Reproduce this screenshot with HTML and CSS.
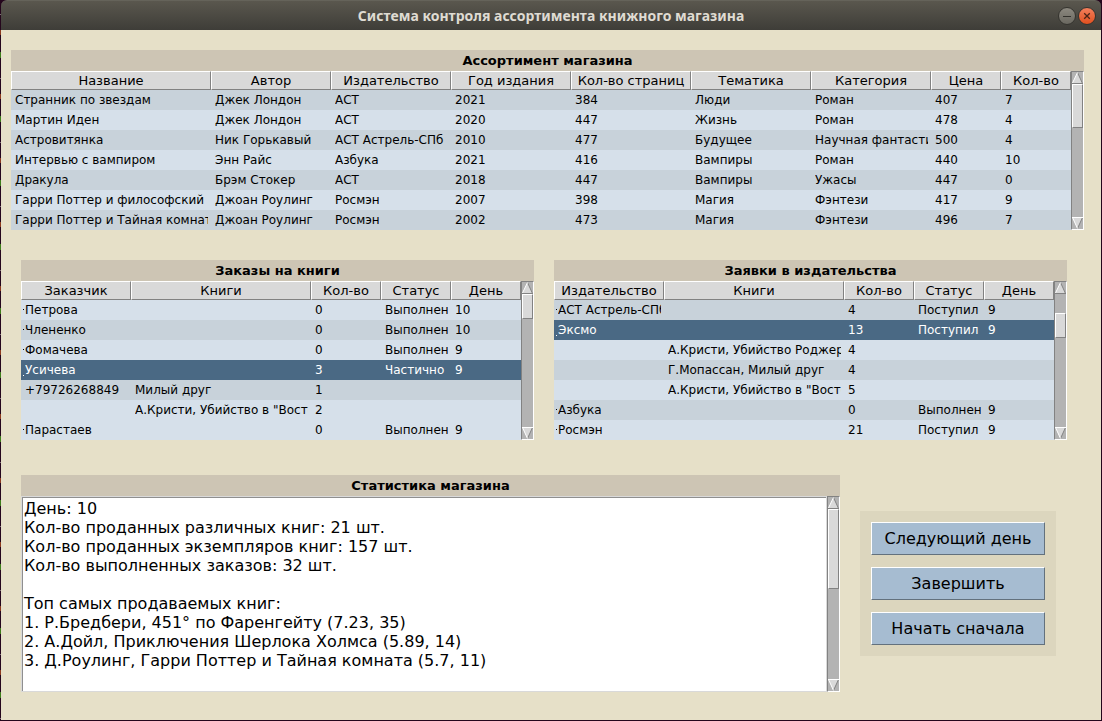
FILE: index.html
```html
<!DOCTYPE html>
<html lang="ru">
<head>
<meta charset="utf-8">
<title>Система контроля ассортимента книжного магазина</title>
<link rel="stylesheet" href="styles.css">
</head>
<body>
<svg class="defs" aria-hidden="true">
  <symbol id="up" viewBox="0 0 11 12"><path d="M5.5 0.5L10.5 11.5H0.5Z" fill="#d9d9d9"/><path d="M10.5 11.5L5.5 0.5" stroke="#828282" fill="none"/><path d="M0 11.5H11" stroke="#828282"/><path d="M0.5 11L5.5 0.5" stroke="#fff" fill="none"/></symbol>
  <symbol id="down" viewBox="0 0 11 12"><path d="M0.5 0.5H10.5L5.5 11.5Z" fill="#d9d9d9"/><path d="M5.5 11.5L10.5 0.5" stroke="#828282" fill="none"/><path d="M5.5 11.5L0.5 0.5" stroke="#fff" fill="none"/><path d="M0 0.5H11" stroke="#fff"/></symbol>
</svg>
<div class="window">
  <header class="titlebar">
    <h1 class="titlebar-text">Система контроля ассортимента книжного магазина</h1>
    <div class="titlebar-controls">
      <button class="control" type="button" aria-label="Свернуть"><svg viewBox="0 0 16 16"><path d="M4 8.5h8" stroke="#33322d" stroke-width="1"/></svg></button>
      <button class="control control-close" type="button" aria-label="Закрыть"><svg viewBox="0 0 16 16"><path d="M5.2 5.2l5.6 5.6M10.8 5.2l-5.6 5.6" stroke="#4b2416" stroke-width="1.3"/></svg></button>
    </div>
  </header>
  <main class="content">
    <section class="panel">
      <h2 class="panel-title">Ассортимент магазина</h2>
      <div class="panel-body">
        <table class="grid">
          <colgroup><col class="c-name"><col class="c-mid"><col class="c-mid"><col class="c-mid"><col class="c-mid"><col class="c-mid"><col class="c-mid"><col class="c-small"><col class="c-small"></colgroup>
          <thead><tr><th>Название</th><th>Автор</th><th>Издательство</th><th>Год издания</th><th>Кол-во страниц</th><th>Тематика</th><th>Категория</th><th>Цена</th><th>Кол-во</th></tr></thead>
          <tbody>
            <tr class="dark"><td><div>Странник по звездам</div></td><td><div>Джек Лондон</div></td><td><div>АСТ</div></td><td><div>2021</div></td><td><div>384</div></td><td><div>Люди</div></td><td><div>Роман</div></td><td><div>407</div></td><td><div>7</div></td></tr>
            <tr><td><div>Мартин Иден</div></td><td><div>Джек Лондон</div></td><td><div>АСТ</div></td><td><div>2020</div></td><td><div>447</div></td><td><div>Жизнь</div></td><td><div>Роман</div></td><td><div>478</div></td><td><div>4</div></td></tr>
            <tr class="dark"><td><div>Астровитянка</div></td><td><div>Ник Горькавый</div></td><td><div>АСТ Астрель-СПб</div></td><td><div>2010</div></td><td><div>477</div></td><td><div>Будущее</div></td><td><div>Научная фантастика</div></td><td><div>500</div></td><td><div>4</div></td></tr>
            <tr><td><div>Интервью с вампиром</div></td><td><div>Энн Райс</div></td><td><div>Азбука</div></td><td><div>2021</div></td><td><div>416</div></td><td><div>Вампиры</div></td><td><div>Роман</div></td><td><div>440</div></td><td><div>10</div></td></tr>
            <tr class="dark"><td><div>Дракула</div></td><td><div>Брэм Стокер</div></td><td><div>АСТ</div></td><td><div>2018</div></td><td><div>447</div></td><td><div>Вампиры</div></td><td><div>Ужасы</div></td><td><div>447</div></td><td><div>0</div></td></tr>
            <tr><td><div>Гарри Поттер и философский камень</div></td><td><div>Джоан Роулинг</div></td><td><div>Росмэн</div></td><td><div>2007</div></td><td><div>398</div></td><td><div>Магия</div></td><td><div>Фэнтези</div></td><td><div>417</div></td><td><div>9</div></td></tr>
            <tr class="dark"><td><div>Гарри Поттер и Тайная комната</div></td><td><div>Джоан Роулинг</div></td><td><div>Росмэн</div></td><td><div>2002</div></td><td><div>473</div></td><td><div>Магия</div></td><td><div>Фэнтези</div></td><td><div>496</div></td><td><div>7</div></td></tr>
          </tbody>
        </table>
        <div class="scrollbar">
          <button class="arrow" type="button" aria-label="Вверх"><svg><use href="#up"/></svg></button>
          <div class="track"><div style="height:0%"></div><div class="thumb" style="height:33%"></div></div>
          <button class="arrow" type="button" aria-label="Вниз"><svg><use href="#down"/></svg></button>
        </div>
      </div>
    </section>

    <div class="pair">
      <section class="panel">
        <h2 class="panel-title">Заказы на книги</h2>
        <div class="panel-body">
          <table class="grid">
            <colgroup><col class="c-party"><col class="c-books"><col class="c-small"><col class="c-small"><col class="c-small"></colgroup>
            <thead><tr><th>Заказчик</th><th>Книги</th><th>Кол-во</th><th>Статус</th><th>День</th></tr></thead>
            <tbody>
              <tr><td class="node"><div>Петрова</div></td><td></td><td><div>0</div></td><td><div>Выполнен</div></td><td><div>10</div></td></tr>
              <tr class="dark"><td class="node"><div>Члененко</div></td><td></td><td><div>0</div></td><td><div>Выполнен</div></td><td><div>10</div></td></tr>
              <tr><td class="node"><div>Фомачева</div></td><td></td><td><div>0</div></td><td><div>Выполнен</div></td><td><div>9</div></td></tr>
              <tr class="selected"><td class="node"><div>Усичева</div></td><td></td><td><div>3</div></td><td><div>Частично</div></td><td><div>9</div></td></tr>
              <tr class="dark"><td><div>+79726268849</div></td><td><div>Милый друг</div></td><td><div>1</div></td><td></td><td></td></tr>
              <tr><td></td><td><div>А.Кристи, Убийство в "Восточном экспрессе"</div></td><td><div>2</div></td><td></td><td></td></tr>
              <tr><td class="node"><div>Парастаев</div></td><td></td><td><div>0</div></td><td><div>Выполнен</div></td><td><div>9</div></td></tr>
            </tbody>
          </table>
          <div class="scrollbar">
            <button class="arrow" type="button" aria-label="Вверх"><svg><use href="#up"/></svg></button>
            <div class="track"><div style="height:0%"></div><div class="thumb" style="height:19%"></div></div>
            <button class="arrow" type="button" aria-label="Вниз"><svg><use href="#down"/></svg></button>
          </div>
        </div>
      </section>
      <section class="panel">
        <h2 class="panel-title">Заявки в издательства</h2>
        <div class="panel-body">
          <table class="grid">
            <colgroup><col class="c-party"><col class="c-books"><col class="c-small"><col class="c-small"><col class="c-small"></colgroup>
            <thead><tr><th>Издательство</th><th>Книги</th><th>Кол-во</th><th>Статус</th><th>День</th></tr></thead>
            <tbody>
              <tr class="dark"><td class="node"><div>АСТ Астрель-СПб</div></td><td></td><td><div>4</div></td><td><div>Поступил</div></td><td><div>9</div></td></tr>
              <tr class="selected"><td class="node"><div>Эксмо</div></td><td></td><td><div>13</div></td><td><div>Поступил</div></td><td><div>9</div></td></tr>
              <tr><td></td><td><div>А.Кристи, Убийство Роджера Экройда</div></td><td><div>4</div></td><td></td><td></td></tr>
              <tr class="dark"><td></td><td><div>Г.Мопассан, Милый друг</div></td><td><div>4</div></td><td></td><td></td></tr>
              <tr><td></td><td><div>А.Кристи, Убийство в "Восточном экспрессе"</div></td><td><div>5</div></td><td></td><td></td></tr>
              <tr class="dark"><td class="node"><div>Азбука</div></td><td></td><td><div>0</div></td><td><div>Выполнен</div></td><td><div>9</div></td></tr>
              <tr><td class="node"><div>Росмэн</div></td><td></td><td><div>21</div></td><td><div>Поступил</div></td><td><div>9</div></td></tr>
            </tbody>
          </table>
          <div class="scrollbar">
            <button class="arrow" type="button" aria-label="Вверх"><svg><use href="#up"/></svg></button>
            <div class="track"><div style="height:14%"></div><div class="thumb" style="height:19%"></div></div>
            <button class="arrow" type="button" aria-label="Вниз"><svg><use href="#down"/></svg></button>
          </div>
        </div>
      </section>
    </div>

    <div class="bottom">
      <section class="panel stats">
        <h2 class="panel-title" id="stats-title">Статистика магазина</h2>
        <div class="panel-body">
          <textarea class="stats-text" rows="10" readonly aria-labelledby="stats-title">День: 10
Кол-во проданных различных книг: 21 шт.
Кол-во проданных экземпляров книг: 157 шт.
Кол-во выполненных заказов: 32 шт.

Топ самых продаваемых книг:
1. Р.Бредбери, 451° по Фаренгейту (7.23, 35)
2. А.Дойл, Приключения Шерлока Холмса (5.89, 14)
3. Д.Роулинг, Гарри Поттер и Тайная комната (5.7, 11)</textarea>
          <div class="scrollbar">
            <button class="arrow" type="button" aria-label="Вверх"><svg><use href="#up"/></svg></button>
            <div class="track"><div style="height:0%"></div><div class="thumb" style="height:47%"></div></div>
            <button class="arrow" type="button" aria-label="Вниз"><svg><use href="#down"/></svg></button>
          </div>
        </div>
      </section>
      <div class="actions">
        <button class="action" type="button">Следующий день</button>
        <button class="action" type="button">Завершить</button>
        <button class="action" type="button">Начать сначала</button>
      </div>
    </div>
  </main>
</div>
</body>
</html>
```

FILE: styles.css
```css
* { box-sizing: border-box; }

body {
  margin: 0;
  background: #24061c;
  font-family: "DejaVu Sans", sans-serif;
  color: #000;
}

.defs { display: none; }

.window {
  display: flex;
  flex-direction: column;
  min-height: 100vh;
  padding: 0 1px 1px;
  background:
    repeating-linear-gradient(#24061c 0 14px, #7d6a74 14px 15px, #24061c 15px 30px, #8c3a1e 30px 35px, #24061c 35px 52px, #3f7d1a 52px 58px, #24061c 58px 64px) left / 1px 100% no-repeat;
}

.titlebar {
  display: grid;
  grid-template-columns: 1fr auto 1fr;
  align-items: center;
  height: 30px;
  padding: 0 5px;
  border-top: 1px solid #65635a;
  border-radius: 6px 6px 0 0;
  background: linear-gradient(#5a574e, #3e3d38);
}

.titlebar-text {
  grid-column: 2;
  margin: 0;
  font: bold 14px/20px "Noto Sans", sans-serif;
  color: #dfdbd2;
}

.titlebar-controls {
  display: flex;
  justify-content: flex-end;
  gap: 2px;
}

.control {
  width: 18px;
  height: 18px;
  padding: 0;
  border: 1px solid #35342f;
  border-radius: 50%;
  background: linear-gradient(#8b887f, #6a6860);
}

.control svg {
  display: block;
  width: 16px;
  height: 16px;
}

.control-close { background: linear-gradient(#f37f5c, #e0501f); }

.content {
  flex: 1;
  padding: 20px 17px 28px 10px;
  background: #e6e0c8;
}

.panel { min-width: 0; }

.panel-title {
  margin: 0;
  height: 21px;
  background: #cdc5b4;
  text-align: center;
  font-size: 13px;
  line-height: 21px;
}

.panel-body {
  display: flex;
  align-items: stretch;
}

.grid {
  width: 100%;
  min-width: 0;
  table-layout: fixed;
  border-collapse: separate;
  border-spacing: 0;
}

.c-name { width: 200px; }
.c-mid { width: 120px; }
.c-small { width: 70px; }
.c-party { width: 110px; }
.c-books { width: 180px; }

.grid th {
  height: 19px;
  padding: 0;
  border: 1px solid;
  border-color: #fff #828282 #828282 #fff;
  background: #d9d9d9;
  font-size: 13px;
  font-weight: normal;
  line-height: 17px;
  white-space: nowrap;
}

.grid td {
  height: 20px;
  padding: 0 3px 0 4px;
  font-size: 12px;
  line-height: 20px;
}

.grid td div {
  overflow: hidden;
  white-space: nowrap;
}

.grid tbody tr { background: #d6e0ea; }
.grid tbody .dark { background: #c8d2da; }
.grid tbody .selected { background: #4a6984; color: #fff; }

.node { background: linear-gradient(currentColor, currentColor) 2px 9px / 1px 1px no-repeat; }
.selected .node { background-position: 2px 15px; }

.scrollbar {
  display: flex;
  flex-direction: column;
  flex: none;
  width: 13px;
  border: 1px solid;
  border-color: #828282 #fff #fff #828282;
  background: #b3b3b3;
}

.arrow {
  flex: none;
  width: 11px;
  height: 12px;
  padding: 0;
  border: 0;
  background: none;
}

.arrow svg {
  display: block;
  width: 11px;
  height: 12px;
}

.track { flex: 1; }

.thumb {
  border: 1px solid;
  border-color: #fff #828282 #828282 #fff;
  background: #d9d9d9;
}

.pair {
  display: grid;
  grid-template-columns: 1fr 1fr;
  gap: 20px;
  margin: 30px 17px 0 10px;
}

.bottom {
  display: flex;
  align-items: center;
  gap: 20px;
  margin: 35px 28px 0 10px;
}

.stats { flex: 1; }

.stats-text {
  flex: 1;
  min-width: 0;
  height: 196px;
  padding: 2px;
  border: 1px solid #d9d9d9;
  border-radius: 0;
  outline: 0;
  box-shadow: inset 1px 1px #8f8f8f;
  background: #fff;
  color: #000;
  font: 16px/19px "DejaVu Sans", sans-serif;
  resize: none;
  overflow: hidden;
}

.actions {
  display: flex;
  flex-direction: column;
  gap: 12px;
  width: 196px;
  padding: 11px;
  background: #dcd6be;
}

.action {
  height: 33px;
  padding: 0;
  border: 1px solid;
  border-color: #fff #63717d #63717d #fff;
  background: #a6bcd1;
  color: #000;
  font: 16px/19px "DejaVu Sans", sans-serif;
}
```
